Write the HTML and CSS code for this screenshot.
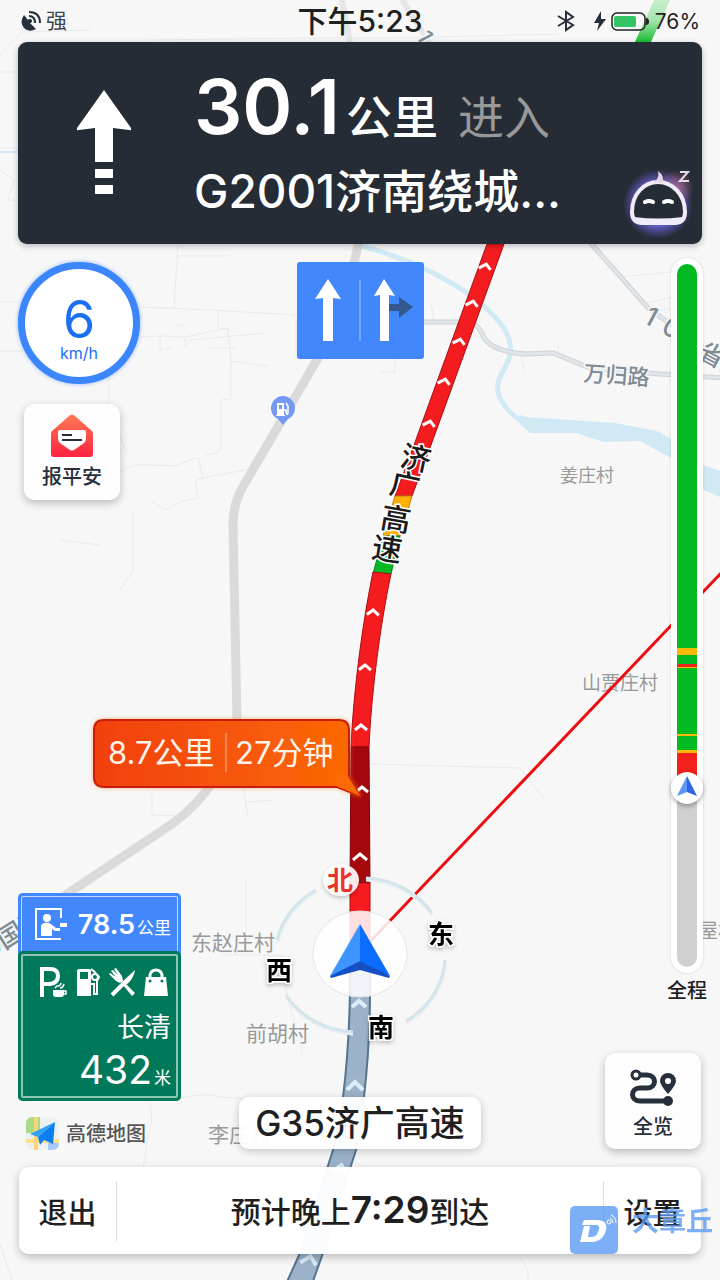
FILE: index.html
```html
<!DOCTYPE html>
<html lang="zh-CN">
<head>
    <meta charset="UTF-8">
    <meta name="viewport" content="width=device-width, initial-scale=1.0">
    <title>导航</title>
    <link rel="stylesheet" href="styles.css">
</head>
<body>
    <svg class="map" viewBox="0 0 720 1280" preserveAspectRatio="xMidYMid slice">
        <defs>
            <linearGradient id="jam" x1="0" x2="1" y1="0" y2="0">
                <stop offset="0" stop-color="#f2400f"/>
                <stop offset="1" stop-color="#fb6a04"/>
            </linearGradient>
            <linearGradient id="fade" x1="0" x2="0" y1="0" y2="1">
                <stop offset="0" stop-color="#cdf2d2"/>
                <stop offset=".5" stop-color="#a5e6ae"/>
                <stop offset="1" stop-color="#0fb92c"/>
            </linearGradient>
            <filter id="soft" x="-30%" y="-30%" width="160%" height="160%">
                <feDropShadow dx="0" dy="2" stdDeviation="2" flood-color="#000" flood-opacity=".25"/>
            </filter>
            <filter id="glow" x="-10%" y="-20%" width="120%" height="140%">
                <feDropShadow dx="0" dy="0" stdDeviation="2" flood-color="#ff7a30" flood-opacity=".6"/>
            </filter>
        </defs>

        <!-- lanes and field borders -->
        <g class="lane">
            <path d="M0 55L22 32L90 30M0 72H18M0 148H18M0 170L14 180L8 200H18M150 40L300 38H390L560 34"/>
            <path d="M0 302H20M0 351H22M178 245L174 308M178 256H228M140 307L210 310L296 315M218 310V328L228 329L231 363V399L221 400V448Q220 453 206 455"/>
            <path d="M140 337L160 336V350L172 348M160 336L185 337L186 347M185 337L228 328M175 325H186M190 340L266 333M208 348H236M231 361L268 366M109 377V410L126 451"/>
            <path d="M120 472Q132 463 150 465L175 466L195 458H198L203 478L195 481L198 498L180 502L165 510L150 500M203 478L250 469"/>
            <path d="M296 315V358M395 350V372H380M431 303L434 320M524 370L519 350M558 345V358M620 277L672 272M640 305L672 297M650 312L672 308"/>
            <path d="M133 512V570L120 590M60 540L100 545M140 780L152 795V815L185 816M242 782L248 815M248 802L275 800M370 764L520 768L545 800"/>
            <path d="M246 880V942M222 940V955H282V975L303 1055M180 1098Q205 1092 220 1097L246 1099M150 1102Q154 1120 148 1135L143 1170M0 1245L12 1280M520 1258Q530 1270 528 1280"/>
        </g>

        <!-- river -->
        <path class="stream" d="M362 246C420 262 480 292 505 330C524 365 488 372 500 398Q508 414 526 424"/>
        <path class="water" d="M520 415L526 417L615 423L657 431Q680 442 700 464L720 471V497L702 489L671 458L640 441L604 442L576 433L530 433L518 422Z"/>
        <path class="stream thin" d="M0 152H20"/>

        <!-- side roads -->
        <path class="road" d="M342 0L350 42"/>
        <path class="road wide" d="M359 240Q348 300 318 358L241 490Q233 506 233 525L237 720Q238 750 207 790Q188 815 160 832L70 892L-6 948"/>
        <path class="street-edge" d="M400 322H466Q478 322 484 338Q494 352 525 354L553 353L590 368L660 374L724 378M588 240L648 308L676 328L724 362"/>
        <path class="street" d="M400 322H466Q478 322 484 338Q494 352 525 354L553 353L590 368L660 374L724 378M588 240L648 308L676 328L724 362"/>
        <path class="road" d="M402 0L430 44"/>

        <!-- place names -->
        <g class="place">
            <text x="560" y="482" font-size="18">姜庄村</text>
            <text x="582" y="690" font-size="19">山贾庄村</text>
            <text x="191" y="950" font-size="21">东赵庄村</text>
            <text x="246" y="1041" font-size="21">前胡村</text>
            <text x="208" y="1142" font-size="21">李庄村</text>
            <text x="698" y="938" font-size="20">屋村</text>
        </g>
        <g class="road-name">
            <text x="583" y="381" font-size="22" transform="rotate(4 583 381)">万归路</text>
            <text x="642" y="322" font-size="26" transform="rotate(28 642 322)">1</text>
            <text x="660" y="332" font-size="26" transform="rotate(28 660 332)">0</text>
            <text x="697" y="357" font-size="25" transform="rotate(28 697 357)">省道</text>
            <text x="416" y="36" font-size="22" transform="rotate(62 416 36)">1</text>
            <text x="-10" y="959" font-size="26" transform="rotate(-32 -10 959)">0国道</text>
        </g>

        <path d="M634 44L656 -4H672L650 44Z" fill="url(#fade)"/>

        <!-- route line, ahead of the car -->
        <g class="route">
            <path class="slow" d="M487 244L414 445L395 496H412L431 445L504 244Z"/>
            <path class="busy" d="M395 496L383 536H400L412 496Z"/>
            <path class="free" d="M383 536L373 574H391L400 536Z"/>
            <path class="slow" d="M373 572C361 630 353 700 351 747H369C371 700 379 630 391 574Z"/>
            <path class="blocked" d="M351 747L350 883H370L369 747Z"/>
            <path class="slow" d="M350 883V960H370V883Z"/>
            <path class="passed" d="M350 960V990Q349 1050 343 1097Q339 1128 333 1150L300 1253L286 1284H312L323 1253L356 1150Q362 1128 364 1097Q370 1045 370 990V960Z"/>
        </g>
        <g class="chevron">
            <path d="M-6 3L1 -2L6 3" transform="translate(485 266) rotate(8)"/>
            <path d="M-6 3L1 -2L6 3" transform="translate(472 303) rotate(8)"/>
            <path d="M-6 3L1 -2L6 3" transform="translate(459 341) rotate(8)"/>
            <path d="M-6 3L1 -2L6 3" transform="translate(444 381) rotate(8)"/>
            <path d="M-6 3L1 -2L6 3" transform="translate(429 423) rotate(8)"/>
            <path d="M-6 3L0 -2L6 3" transform="translate(373 612) rotate(4)"/>
            <path d="M-6 3L0 -2L6 3" transform="translate(365 667) rotate(2)"/>
            <path d="M-6 3L0 -2L6 3" transform="translate(361 727)"/>
            <path d="M-6 3L0 -2L6 3" transform="translate(362 789)"/>
            <path d="M-7 4L0 -2L7 4" transform="translate(360 856)"/>
            <path class="dim" d="M-7 4L0 -2L7 4" transform="translate(359 1003)"/>
            <path class="dim" d="M-8 5L0 -3L8 5" transform="translate(355 1085)"/>
            <path class="dim" d="M-8 5L1 -3L8 5" transform="translate(340 1168) rotate(8)"/>
            <path class="dim" d="M-8 5L1 -3L8 5" transform="translate(309 1259) rotate(10)"/>
        </g>
        <g class="highway-name">
            <text x="401" y="469" transform="rotate(12 416 458)">济</text>
            <text x="390" y="496" transform="rotate(12 405 485)">广</text>
            <text x="381" y="530" transform="rotate(10 396 519)">高</text>
            <text x="372" y="560" transform="rotate(9 387 549)">速</text>
        </g>

        <!-- straight line to the destination -->
        <path class="bearing" d="M722 572L364 948"/>

        <!-- gas station pin -->
        <g transform="translate(283 409)">
            <path d="M0 16L-5 10A12 12 0 1 1 5 10Z" fill="#7598f4"/>
            <path fill="#fff" fill-rule="evenodd" d="M-6 -6H1V6H2V7H-7V6H-6ZM-4 -4V0H-1V-4Z"/>
            <path d="M1 1H3V4Q5 7 5 3V-3L3 -6" fill="none" stroke="#fff" stroke-width="1.5"/>
        </g>

        <!-- compass -->
        <g class="dial-shade">
            <path d="M366 880A84 78 0 0 1 432 915M278 942A84 78 0 0 1 316 892M286 997A84 78 0 0 0 353 1034M446 962A84 78 0 0 1 406 1023"/>
        </g>
        <g class="dial">
            <path d="M366 878A84 78 0 0 1 432 913M277 940A84 78 0 0 1 316 890M286 995A84 78 0 0 0 353 1032M445 960A84 78 0 0 1 406 1021"/>
        </g>
        <ellipse cx="360" cy="954" rx="47" ry="43" fill="#fff" fill-opacity=".86" stroke="#e6e6e6"/>
        <path d="M360 924L330 976L360 964Z" fill="#3d95ff"/>
        <path d="M360 924L390 976L360 964Z" fill="#0a6dff"/>
        <path d="M330 976L360 961L390 976L389 978L360 970L331 978Z" fill="#1450c4"/>
        <ellipse cx="341" cy="880" rx="18" ry="16" fill="#fff" fill-opacity=".9" filter="url(#soft)"/>
        <text class="north" x="327" y="890">北</text>
        <g class="bearing-name" filter="url(#soft)">
            <text x="428" y="944">东</text>
            <text x="266" y="980">西</text>
            <text x="368" y="1037">南</text>
        </g>

        <!-- jam callout -->
        <path d="M104 720H339Q349 720 349 730V777L360 796L337 787H104Q94 787 94 777V730Q94 720 104 720Z" fill="url(#jam)" stroke="#c81e0a" stroke-width="2" stroke-linejoin="round" filter="url(#glow)"/>
        <path d="M348 776L360 796L336 786V770Z" fill="#fb6a04"/>
        <path d="M226 733V772" stroke="#ffb48f" stroke-width="1"/>
        <text class="jam-text" x="108" y="764">8.7公里</text>
        <text class="jam-text" x="235" y="764">27分钟</text>
    </svg>

    <div class="screen">
        <header class="status">
            <div class="signal">
                <svg width="22" height="22" viewBox="0 0 22 22" fill="none" stroke="#26303c" stroke-width="2">
                    <path d="M4 5Q-1 12 4 18Q9 23 16 19L10 13L12 11L9 9L8 10Z" fill="#26303c" stroke="none"/>
                    <circle cx="10" cy="11" r="2" fill="#26303c" stroke="none"/>
                    <path d="M9 6Q15 6 15 13M9 2Q20 2 20 13"/>
                </svg>
                <span>强</span>
            </div>
            <time class="clock">下午5:23</time>
            <div class="power">
                <svg width="18" height="22" viewBox="0 0 18 22" fill="none" stroke="#26303c" stroke-width="2">
                    <path d="M1 6L16 15L9 20V2L16 7L1 16"/>
                </svg>
                <svg width="58" height="22" viewBox="0 0 58 22">
                    <path d="M8 1L1 13H6L4 21L13 9H8Z" fill="#26303c"/>
                    <rect x="19" y="3" width="33" height="17" rx="5" fill="none" stroke="#222" stroke-width="1.5"/>
                    <rect x="21" y="6" width="22" height="11" rx="2" fill="#34c465"/>
                    <path d="M53 8Q56 8 56 11.500T53 15Z" fill="#222"/>
                </svg>
                <span>76%</span>
            </div>
        </header>

        <section class="guide">
            <svg class="turn" width="56" height="106" viewBox="0 0 56 106" fill="#fff">
                <path d="M28 0L55 38Q56 41 53 40L37 38V72H19V38L3 40Q0 41 1 38ZM19 79H37V88H19ZM19 95H37V104H19Z"/>
            </svg>
            <div class="guide-text">
                <p class="distance"><strong>30.1</strong>公里<span>进入</span></p>
                <p class="next-road">G2001济南绕城...</p>
            </div>
            <button class="assistant" aria-label="语音助手">
                <svg width="72" height="72" viewBox="0 0 72 72">
                    <defs>
                        <radialGradient id="halo">
                            <stop offset=".55" stop-color="#6b6fe8"/>
                            <stop offset="1" stop-color="#6b4fc8" stop-opacity="0"/>
                        </radialGradient>
                        <radialGradient id="blush">
                            <stop offset="0" stop-color="#b87098" stop-opacity=".8"/>
                            <stop offset="1" stop-color="#b87098" stop-opacity="0"/>
                        </radialGradient>
                    </defs>
                    <circle cx="34" cy="38" r="35" fill="url(#halo)"/>
                    <circle cx="52" cy="22" r="18" fill="url(#blush)"/>
                    <path d="M34 16C20 16 8 28 8 46Q8 57 19 57H50Q61 57 61 46C61 28 48 16 34 16Z" fill="#262c35" stroke="#f1eaf8" stroke-width="4"/>
                    <path d="M10 51Q34 54 59 51Q58 58 50 59H19Q11 58 10 51Z" fill="#f1eaf8"/>
                    <path d="M30 16Q36 12 34 5Q41 10 38 17Z" fill="#e6d4e8"/>
                    <path d="M21 36Q25 34 29 36M40 36Q44 34 48 36" fill="none" stroke="#fff" stroke-width="4" stroke-linecap="round"/>
                    <path d="M56 6H64L56 15H65" fill="none" stroke="#e4dce8" stroke-width="2"/>
                </svg>
            </button>
        </section>

        <main class="panels">
            <div class="left">
                <div class="speed"><strong>6</strong><span>km/h</span></div>
                <button class="tile report">
                    <svg width="50" height="50" viewBox="0 0 50 50">
                        <defs>
                            <linearGradient id="mail" x1="0" x2="0" y1="0" y2="1">
                                <stop offset="0" stop-color="#ff7a55"/>
                                <stop offset="1" stop-color="#fc2240"/>
                            </linearGradient>
                        </defs>
                        <path d="M22 3Q25 0 28 3L45 18Q46 19 46 21V41Q46 44 43 44H7Q4 44 4 41V21Q4 19 5 18Z" fill="url(#mail)"/>
                        <path d="M13 17H37Q39 17 39 19V26Q39 28 37 30L27 37Q25 38 23 37L13 30Q11 28 11 26V19Q11 17 13 17Z" fill="#fff"/>
                        <path d="M15 22H25M15 27H35" stroke="#26303c" stroke-width="2"/>
                    </svg>
                    <span>报平安</span>
                </button>

                <div class="signs">
                    <div class="toll">
                        <svg width="34" height="34" viewBox="0 0 34 34" fill="#fff">
                            <path d="M27 11V2H2V32H27" fill="none" stroke="#fff" stroke-width="2"/>
                            <circle cx="13" cy="11" r="4"/>
                            <path d="M8 17Q13 14 17 17L22 21H26V24H21L18 22V29H7V19Z"/>
                            <rect x="26" y="16" width="7" height="4"/>
                        </svg>
                        <p><strong>78.5</strong>公里</p>
                    </div>
                    <div class="service">
                        <div class="facilities">
                            <svg width="30" height="32" viewBox="0 0 30 32" fill="none" stroke="#fff">
                                <path d="M4 31V3H12Q20 3 20 10T12 18H4" stroke-width="4"/>
                                <path d="M15 24H26V28Q26 31 23 31H18Q15 31 15 28Z" fill="#fff" stroke="none"/>
                                <path d="M26 25H28V28H25M17 22Q19 19 21 20Q23 19 23 17M22 22Q25 22 26 18" stroke-width="1.5"/>
                            </svg>
                            <svg width="24" height="32" viewBox="0 0 24 32" fill="#fff">
                                <path fill-rule="evenodd" d="M3 3H13Q15 3 15 5V30H1V5Q1 3 3 3ZM4 6V13H12V6Z"/>
                                <path d="M14 18H18V28H21V15L23 11L21 9M15 3L20 7" fill="none" stroke="#fff" stroke-width="2"/>
                                <circle cx="19" cy="11" r="3" fill="none" stroke="#fff" stroke-width="2"/>
                            </svg>
                            <svg width="28" height="32" viewBox="0 0 28 32" fill="#fff">
                                <path d="M27 4Q26 13 17 20L13 17ZM15 19L18 18L27 27L24 30Z"/>
                                <path d="M4 29L15 18" stroke="#fff" stroke-width="4"/>
                                <path d="M12 17L8 15L1 8L2 7L8 11L3 5L5 4L10 9L6 3L8 2L14 10L15 15Z"/>
                            </svg>
                            <svg width="24" height="32" viewBox="0 0 24 32">
                                <path d="M6 14V9Q7 4 12 4T18 9V14" fill="none" stroke="#fff" stroke-width="3"/>
                                <path d="M2 11H22L24 30H0Z" fill="#fff"/>
                                <circle cx="6" cy="15" r="1.500" fill="#00795a"/>
                                <circle cx="18" cy="15" r="1.500" fill="#00795a"/>
                            </svg>
                        </div>
                        <p class="service-name">长清</p>
                        <p class="service-distance"><strong>432</strong>米</p>
                    </div>
                </div>

                <div class="brand">
                    <svg width="34" height="34" viewBox="0 0 34 34">
                        <rect width="33" height="33" rx="7" fill="#eef0f2"/>
                        <path d="M7 0H14V16H0V7Q0 0 7 0Z" fill="#a9dc86"/>
                        <path d="M0 22H33V26H0Z" fill="#fde08a"/>
                        <path d="M8 0H12V33H8Z" fill="#fbd37a"/>
                        <path d="M22 26H33Q33 33 26 33H22Z" fill="#a9c8f8"/>
                        <path d="M29 5L4 17L12 20Z" fill="#2fa4f7"/>
                        <path d="M29 5L12 20L14 28L18 23L27 27Z" fill="#0b7ff0"/>
                    </svg>
                    <span>高德地图</span>
                </div>
            </div>

            <div class="middle">
                <svg class="lanes" width="127" height="97" viewBox="0 0 127 97">
                    <rect width="127" height="97" rx="3" fill="#4387fd"/>
                    <path d="M92 42H102V35L116 45L102 56V49H92Z" fill="#35578f"/>
                    <path d="M31 17L44 37L36 36V79H26V36L18 37ZM87 17L98 34L92 33V79H83V33L77 34Z" fill="#fff"/>
                    <path d="M63 18V79" stroke="#a6c5fd"/>
                </svg>
                <p class="current-road">G35济广高速</p>
            </div>

            <div class="right">
                <div class="progress">
                    <div class="track">
                        <i class="free" style="flex-grow: 384"></i>
                        <i class="busy" style="flex-grow: 7"></i>
                        <i class="free" style="flex-grow: 9"></i>
                        <i class="slow" style="flex-grow: 3"></i>
                        <i class="busy" style="flex-grow: 1"></i>
                        <i class="free" style="flex-grow: 66"></i>
                        <i class="busy" style="flex-grow: 2"></i>
                        <i class="free" style="flex-grow: 14"></i>
                        <i class="busy" style="flex-grow: 3"></i>
                        <i class="slow" style="flex-grow: 35"></i>
                        <i class="done" style="flex-grow: 179">
                            <svg class="puck" width="32" height="32" viewBox="0 0 32 32">
                                <circle cx="16" cy="16" r="16" fill="#fff"/>
                                <path d="M16 4L6 24L16 20Z" fill="#5c98f5"/>
                                <path d="M16 4L26 24L16 20Z" fill="#2f63e6"/>
                            </svg>
                        </i>
                    </div>
                    <span>全程</span>
                </div>
                <button class="tile overview">
                    <svg width="50" height="40" viewBox="0 0 50 40" fill="none" stroke="#26303c" stroke-width="5">
                        <path d="M11 8H19C29 8 29 21 19 21H12C2 21 2 34 12 34H38"/>
                        <circle cx="8" cy="8" r="4" stroke-width="3" fill="#fff"/>
                        <circle cx="40" cy="34" r="5" fill="#26303c" stroke="none"/>
                        <path fill="#26303c" stroke="none" fill-rule="evenodd" d="M40 27Q32 18 32 14A8 8 0 0 1 48 14Q48 18 40 27ZM40 11A3 3 0 1 0 40 17A3 3 0 1 0 40 11Z"/>
                    </svg>
                    <span>全览</span>
                </button>
            </div>
        </main>

        <footer class="bottom-bar">
            <button>退出</button>
            <p class="eta">预计晚上<strong>7:29</strong>到达</p>
            <button>设置</button>
        </footer>
    </div>

    <div class="watermark">
        <svg width="48" height="48" viewBox="0 0 48 48">
            <rect width="48" height="48" rx="5" fill="#5d9cf4"/>
            <path fill="#fff" fill-rule="evenodd" d="M14 14H27Q38 14 36 24Q33 36 21 36H10L14 20H20L18 31H22Q28 30 29 23Q30 19 26 19H12Z"/>
            <circle cx="39" cy="16" r="2" fill="none" stroke="#fff"/>
            <path d="M40 12Q43 13 43 17M41 9Q46 11 46 17" fill="none" stroke="#fff"/>
        </svg>
        <span>大章丘</span>
    </div>
</body>
</html>
```
FILE: styles.css
```css
* {
    box-sizing: border-box;
}
body {
    margin: 0;
    position: relative;
    overflow: hidden;
    background-color: #f7f7f7;
    color: #1f1f1f;
    font-family: Inter, "Noto Sans CJK SC", sans-serif;
}
p {
    margin: 0;
}
svg {
    display: block;
}
button {
    border: none;
    padding: 0;
    background: none;
    color: inherit;
    font-family: inherit;
    cursor: pointer;
}

/* map */
.map {
    position: absolute;
    top: 0;
    left: 0;
    width: 100%;
    height: 100%;
}
.lane {
    fill: none;
    stroke: #e9eaeb;
    stroke-width: 1;
}
.stream {
    fill: none;
    stroke: #d2eaf4;
    stroke-width: 5;
}
.stream.thin {
    stroke-width: 2;
}
.water {
    fill: #d0e9f5;
}
.road {
    fill: none;
    stroke: #e6e6e6;
    stroke-width: 6;
}
.road.wide {
    stroke: #dadada;
    stroke-width: 9;
}
.street-edge {
    fill: none;
    stroke: #ccd3d8;
    stroke-width: 5;
}
.street {
    fill: none;
    stroke: #e1e5e8;
    stroke-width: 3;
}
.place {
    fill: #999;
    stroke: #f7f7f7;
    stroke-width: 2;
    paint-order: stroke;
}
.road-name {
    fill: #7f8b94;
    stroke: #f7f7f7;
    stroke-width: 3;
    paint-order: stroke;
    font-weight: 500;
}
.route .slow {
    fill: #f51c1f;
    stroke: #a90d12;
}
.route .busy {
    fill: #fdb003;
    stroke: #b98306;
}
.route .free {
    fill: #04b822;
    stroke: #07861c;
}
.route .blocked {
    fill: #a5080c;
    stroke: #7c0508;
}
.route .passed {
    fill: #9cb2c9;
    stroke: #54748f;
    stroke-width: 2;
}
.chevron {
    fill: none;
    stroke: #fff;
    stroke-width: 3;
}
.chevron .dim {
    stroke: #dcecfa;
    stroke-width: 4;
}
.highway-name {
    font-size: 30px;
    font-weight: 500;
    fill: #1a1a1a;
    stroke: #fff;
    stroke-width: 3;
    paint-order: stroke;
}
.bearing {
    stroke: #ee0c12;
    stroke-width: 3;
}
.dial, .dial-shade {
    fill: none;
    stroke: #d3e5ec;
    stroke-width: 3;
}
.dial-shade {
    stroke: #e9eef0;
}
.north {
    font-size: 26px;
    font-weight: 700;
    fill: #e8352c;
}
.bearing-name {
    font-size: 26px;
    font-weight: 700;
    fill: #000;
    stroke: #fff;
    stroke-width: 3;
    paint-order: stroke;
}
.jam-text {
    font-size: 31px;
    fill: #fff3ea;
}

/* page */
.screen {
    position: relative;
    min-height: 100vh;
    display: flex;
    flex-direction: column;
}
.status {
    height: 42px;
    padding: 0 20px;
    display: grid;
    grid-template-columns: 1fr auto 1fr;
    align-items: center;
}
.signal {
    display: flex;
    align-items: center;
    gap: 4px;
    font-size: 21px;
    line-height: 42px;
    color: #3c444e;
}
.clock {
    font-size: 30px;
    line-height: 42px;
    font-weight: 500;
}
.power {
    display: flex;
    align-items: center;
    justify-content: flex-end;
    gap: 4px;
    font-size: 21px;
}
.power svg + svg {
    margin-left: 14px;
}

/* next manoeuvre */
.guide {
    position: relative;
    display: flex;
    align-items: center;
    height: 202px;
    margin: 0 18px;
    border-radius: 9px;
    background-color: #262c35;
    color: #fff;
    box-shadow: 0 2px 6px rgba(0, 0, 0, 0.25);
}
.turn {
    margin: 0 62px 0 58px;
}
.guide-text {
    flex: 1;
    align-self: flex-start;
    padding-top: 19px;
    font-size: 46px;
    font-weight: 500;
}
.distance {
    line-height: 90px;
}
.distance strong {
    margin-right: 6px;
    font-size: 76px;
    font-weight: 600;
}
.distance span {
    margin-left: 20px;
    color: #999;
    font-weight: 400;
}
.next-road {
    line-height: 58px;
}
.assistant {
    position: absolute;
    right: 6px;
    bottom: 6px;
}

/* panels over the map */
.panels {
    flex: 1;
    display: grid;
    grid-template-columns: 1fr auto 1fr;
    padding: 14px 0 18px;
}
.left {
    display: flex;
    flex-direction: column;
    align-items: flex-start;
    padding: 4px 0 0 18px;
}
.speed {
    display: flex;
    flex-direction: column;
    align-items: center;
    width: 122px;
    height: 122px;
    padding-top: 26px;
    border: 7px solid #3b86fc;
    border-radius: 50%;
    background-color: #fff;
    color: #1a6ff2;
    box-shadow: 0 0 4px rgba(59, 134, 252, 0.6);
}
.speed strong {
    font-size: 52px;
    line-height: 50px;
    font-weight: 400;
}
.speed span {
    font-size: 16px;
    line-height: 16px;
}
.tile {
    display: flex;
    flex-direction: column;
    align-items: center;
    width: 96px;
    height: 96px;
    border-radius: 10px;
    background-color: #fdfdfd;
    color: #26303c;
    font-size: 20px;
    line-height: 28px;
    font-weight: 500;
    box-shadow: 0 3px 8px rgba(0, 0, 0, 0.25);
}
.report {
    margin: 20px 0 0 6px;
    padding-top: 9px;
}
.signs {
    width: 163px;
    margin-top: auto;
    color: #fff;
}
.toll {
    display: flex;
    align-items: center;
    justify-content: space-between;
    height: 62px;
    padding: 0 10px 0 16px;
    border-radius: 5px 5px 0 0;
    background-color: #4387fd;
    box-shadow: inset 0 0 0 3px #4387fd, inset 0 0 0 4px #c3d9ff;
    font-size: 17px;
}
.toll strong {
    margin-right: 2px;
    font-size: 27px;
    font-weight: 600;
}
.service {
    position: relative;
    height: 150px;
    margin-top: -4px;
    padding: 15px 10px 0 20px;
    border-radius: 5px;
    background-color: #00795a;
    box-shadow: inset 0 0 0 3px #00795a, inset 0 0 0 5px #8cc5b4;
    text-align: right;
}
.facilities {
    display: flex;
    justify-content: space-between;
    padding-right: 3px;
}
.service-name {
    font-size: 27px;
    line-height: 34px;
    padding-top: 13px;
}
.service-distance {
    font-size: 17px;
    line-height: 50px;
}
.service-distance strong {
    margin-right: 2px;
    font-size: 39px;
    font-weight: 400;
}
.brand {
    display: flex;
    align-items: center;
    gap: 6px;
    margin: 16px 0 -2px 8px;
    color: #555;
    font-size: 20px;
    line-height: 34px;
    font-weight: 500;
}
.middle {
    display: flex;
    flex-direction: column;
    align-items: center;
    justify-content: space-between;
    padding-top: 4px;
}
.current-road {
    padding: 0 16px;
    border-radius: 10px;
    background-color: rgba(255, 255, 255, 0.95);
    font-size: 35px;
    line-height: 52px;
    font-weight: 500;
    box-shadow: 0 2px 8px rgba(0, 0, 0, 0.22);
}
.right {
    display: flex;
    flex-direction: column;
    align-items: flex-end;
    padding-right: 13px;
}
.progress {
    flex: 1;
    display: flex;
    flex-direction: column;
    align-items: center;
    font-size: 20px;
    line-height: 36px;
    font-weight: 500;
}
.track {
    flex: 1;
    display: flex;
    flex-direction: column;
    width: 32px;
    border: 6px solid #fff;
    border-radius: 16px;
    background-color: #fff;
    box-shadow: 0 0 3px rgba(0, 0, 0, 0.15);
}
.track i {
    flex-basis: 0;
}
.track i:first-child {
    border-radius: 10px 10px 0 0;
}
.track .free {
    background-color: #04ba22;
}
.track .busy {
    background-color: #fbb905;
}
.track .slow {
    background-color: #f3201c;
}
.track .done {
    position: relative;
    border-radius: 0 0 10px 10px;
    background-color: #d0d0d0;
}
.puck {
    position: absolute;
    top: -16px;
    left: -6px;
    border-radius: 50%;
    box-shadow: 0 2px 5px rgba(0, 0, 0, 0.35);
}
.overview {
    margin: 44px 6px 0 0;
    padding-top: 14px;
}
.overview span {
    padding-top: 6px;
}

/* bottom bar */
.bottom-bar {
    display: flex;
    align-items: center;
    height: 87px;
    margin: 0 19px 26px;
    border-radius: 10px;
    background-color: rgba(255, 255, 255, 0.96);
    font-size: 30px;
    font-weight: 500;
    box-shadow: 0 3px 8px rgba(0, 0, 0, 0.25);
}
.bottom-bar button {
    width: 97px;
    height: 58px;
    font-size: 29px;
    font-weight: 500;
}
.eta {
    flex: 1;
    border: solid #dedede;
    border-width: 0 1px;
    line-height: 58px;
    text-align: center;
}
.eta strong {
    font-size: 37px;
    font-weight: 600;
}

.watermark {
    position: absolute;
    right: 7px;
    bottom: 26px;
    display: flex;
    gap: 14px;
    color: #5d9cf4;
    font-size: 27px;
    line-height: 32px;
    font-weight: 700;
    opacity: 0.8;
    pointer-events: none;
}
```
